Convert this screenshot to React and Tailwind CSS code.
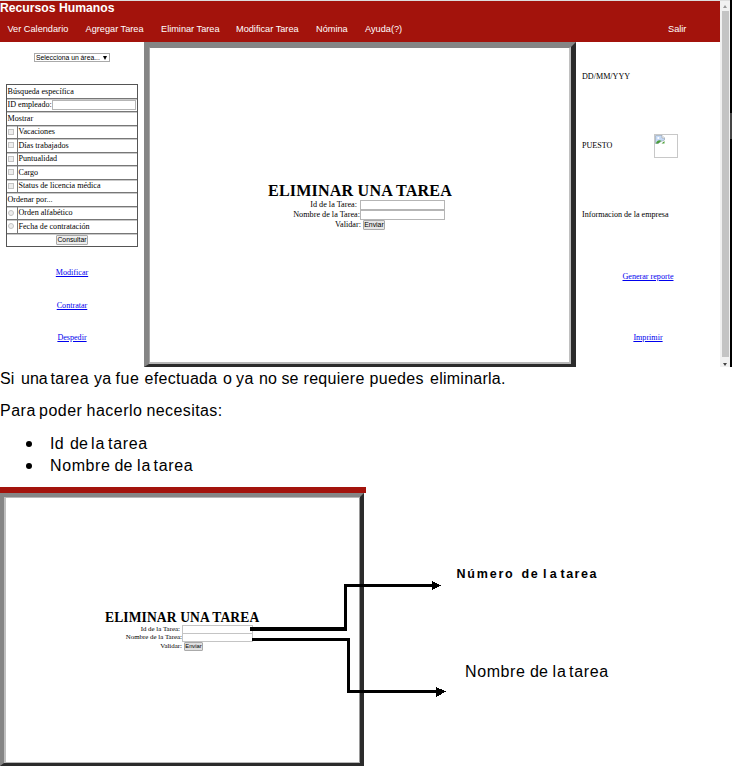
import React from "react";

const serif = "font-['Liberation_Serif',serif]";
const sans = "font-['Liberation_Sans',sans-serif]";

function Words({ items }) {
  return (
    <span className="flex whitespace-nowrap">
      {items.map(([word, width, spacing], i) => (
        <span key={i} className="shrink-0" style={{ width, letterSpacing: spacing }}>
          {word + " "}
        </span>
      ))}
    </span>
  );
}

function NavItem({ className, children }) {
  return <a className={`shrink-0 whitespace-nowrap ${className}`}>{children}</a>;
}

function Row({ kind, children }) {
  return (
    <div className="flex min-h-0 flex-1 items-stretch border-b border-[#777] shadow-[0_1px_0_#c9c9c9]">
      {kind && (
        <div className="flex w-[11px] shrink-0 items-center border-r border-[#777] pl-px">
          <span
            className={`block size-[6px] border border-[#c3c3c3] bg-[#eee] ${kind === "radio" ? "rounded-full" : ""}`}
          />
        </div>
      )}
      <div className="flex flex-1 items-center whitespace-nowrap pl-[0.5px]">{children}</div>
    </div>
  );
}

function SideLink({ className, children }) {
  return (
    <a className={`flex items-center justify-center text-[8.1px] text-[#0000ee] underline ${className}`}>
      {children}
    </a>
  );
}

function LargeForm() {
  return (
    <div className={`flex flex-col text-[8.2px] leading-[10px] ${serif}`}>
      <h1 className="ml-[118px] mt-[133px] h-[19px] whitespace-nowrap text-[16.1px] font-bold leading-[19px] tracking-[0.17px]">
        ELIMINAR UNA TAREA
      </h1>
      <div className="flex h-[10px] whitespace-nowrap">
        <span className="w-[207px] text-right">Id de la Tarea:</span>
        <span className="ml-[3px] h-[10px] w-[85px] border border-[#b5b5b5] bg-white" />
      </div>
      <div className="flex h-[10px] whitespace-nowrap">
        <span className="w-[210px] text-right">Nombre de la Tarea:</span>
        <span className="h-[10px] w-[85px] border border-[#b5b5b5] bg-white" />
      </div>
      <div className="flex h-[10px] whitespace-nowrap">
        <span className="w-[211px] text-right">Validar:</span>
        <button className={`ml-[2px] h-[10px] w-[22px] rounded-[1px] border border-[#aaa] bg-[#e6e6e6] text-[6.9px] leading-[8px] ${sans}`}>
          Enviar
        </button>
      </div>
    </div>
  );
}

function SmallForm() {
  return (
    <div className={`flex flex-col text-[6.9px] leading-[8px] ${serif}`}>
      <h2 className="ml-[99px] mt-[111px] h-[16px] whitespace-nowrap text-[13.55px] font-bold leading-[17px] tracking-[0.11px]">
        ELIMINAR UNA TAREA
      </h2>
      <div className="flex h-[8px] whitespace-nowrap">
        <span className="w-[174px] text-right">Id de la Tarea:</span>
        <span className="ml-[2px] h-[9px] w-[71px] border border-[#c4c4c4]" />
      </div>
      <div className="flex h-[8px] whitespace-nowrap">
        <span className="w-[176px] text-right">Nombre de la Tarea:</span>
        <span className="h-[9px] w-[71px] border border-[#c4c4c4]" />
      </div>
      <div className="flex h-[9px] whitespace-nowrap">
        <span className="w-[176px] pt-px text-right">Validar:</span>
        <button className={`ml-[2px] mt-px h-[9px] w-[19px] rounded-[1px] border border-[#aaa] bg-[#e0e0e0] text-[5.8px] leading-[7px] ${sans}`}>
          Enviar
        </button>
      </div>
    </div>
  );
}

function BrokenImage() {
  return (
    <span className="mb-[2px] block size-[24px] border border-[#c8c8c8] bg-white">
      <svg width="10" height="9" viewBox="0 0 10 9" className="block">
        <path d="M0.5 0.5H7L9.5 3V5L6 6.5L3 8.5H0.5Z" fill="#c5d9f5" stroke="#9aa9b8" strokeWidth="0.7" />
        <path d="M7 0.5V3H9.5" fill="#fff" stroke="#999" strokeWidth="0.6" />
        <circle cx="3.3" cy="3" r="1.1" fill="#fff" />
        <path d="M0.8 8.5C2 5.5 4 4.5 6.5 5.8L3.2 8.5Z" fill="#4b9d39" />
        <path d="M6.5 8.5L9.5 6V8.5Z" fill="#4b9d39" />
      </svg>
    </span>
  );
}

function AppWindow() {
  return (
    <section className="flex h-[367px] w-[733px]">
      <div className="flex w-[720px] shrink-0 flex-col">
        <header className={`h-[42px] border-t border-[#ddd] bg-[#a3130c] text-white ${sans}`}>
          <h1 className="h-[14px] whitespace-nowrap text-[12.2px] font-bold leading-[14px]">Recursos Humanos</h1>
          <nav className="flex h-[28px] pl-[7.5px] text-[9.2px] leading-[28px]">
            <NavItem className="w-[78px]">Ver Calendario</NavItem>
            <NavItem className="w-[75.5px]">Agregar Tarea</NavItem>
            <NavItem className="w-[75px]">Eliminar Tarea</NavItem>
            <NavItem className="w-[80px]">Modificar Tarea</NavItem>
            <NavItem className="w-[49px]">Nómina</NavItem>
            <NavItem className="w-[303px]">Ayuda(?)</NavItem>
            <NavItem className="w-[30px]">Salir</NavItem>
          </nav>
        </header>
        <div className={`flex h-[325px] text-[8.1px] ${serif}`}>
          <aside className="w-[144px] shrink-0 pt-[11px]">
            <div className={`ml-[34px] flex h-[9px] w-[76px] items-center justify-between border border-[#aaa] pl-px pr-[2px] text-[6.8px] leading-[7px] ${sans}`}>
              <span className="whitespace-nowrap">Selecciona un área...</span>
              <svg width="4" height="4" viewBox="0 0 4 4">
                <path d="M0 0H4L2 4Z" fill="#000" />
              </svg>
            </div>
            <div className="ml-[6px] mt-[22px] flex h-[163px] w-[132px] flex-col border border-[#555] leading-[9px]">
              <Row>Búsqueda específica</Row>
              <Row>
                ID empleado:
                <span className="mr-px h-[10px] flex-1 border border-[#b5b5b5]" />
              </Row>
              <Row>Mostrar</Row>
              <Row kind="check">Vacaciones</Row>
              <Row kind="check">Días trabajados</Row>
              <Row kind="check">Puntualidad</Row>
              <Row kind="check">Cargo</Row>
              <Row kind="check">Status de licencia médica</Row>
              <Row>Ordenar por...</Row>
              <Row kind="radio">Orden alfabético</Row>
              <Row kind="radio">Fecha de contratación</Row>
              <div className="flex flex-1 items-center justify-center">
                <button className={`h-[10px] w-[32px] rounded-[1px] border border-[#aaa] bg-[#eee] text-[6.8px] leading-[8px] ${sans}`}>
                  Consultar
                </button>
              </div>
            </div>
            <nav className="mt-[10px]">
              <SideLink className="h-[32.5px]">Modificar</SideLink>
              <SideLink className="h-[32.5px]">Contratar</SideLink>
              <SideLink className="h-[32.5px]">Despedir</SideLink>
            </nav>
          </aside>
          <main className="w-[432px] shrink-0 border-b-[3px] border-l-[5px] border-r-[5px] border-t-[5px] border-b-[#2b2b2b] border-l-[#858585] border-r-[#2b2b2b] border-t-[#858585]">
            <div className="h-full border-b-2 border-l border-r-2 border-t border-b-[#b8b8b8] border-l-[#a8a8a8] border-r-[#c0c0c0] border-t-[#858585]">
              <LargeForm />
            </div>
          </main>
          <aside className="flex flex-1 flex-col pl-[6px] pt-px">
            <div className="flex h-[69px] items-center">DD/MM/YYY</div>
            <div className="flex h-[69px] items-center">
              <span className="w-[72px]">PUESTO</span>
              <BrokenImage />
            </div>
            <div className="flex h-[69px] items-center whitespace-nowrap">Informacion de la empresa</div>
            <SideLink className="mr-[6px] h-[54px]">Generar reporte</SideLink>
            <SideLink className="mr-[6px] h-[62px] pt-[6px]">Imprimir</SideLink>
          </aside>
        </div>
      </div>
      <div className="flex w-[10px] flex-col items-center border-t border-[#ddd] bg-[#f1f1f1]">
        <div className="flex h-[10px] items-center">
          <svg width="4" height="3" viewBox="0 0 4 3"><path d="M0 3L2 0L4 3Z" fill="#999" /></svg>
        </div>
        <div className="w-[7px] flex-1 bg-[#c4c4c4]" />
        <div className="flex h-[10px] items-center pt-[5px]">
          <svg width="4" height="3" viewBox="0 0 4 3"><path d="M0 0L2 3L4 0Z" fill="#444" /></svg>
        </div>
      </div>
      <div className="w-[2px] bg-black pt-[113px]">
        <div className="h-[26px] bg-[#444]" />
      </div>
    </section>
  );
}

function Instructions() {
  return (
    <section className="h-[120px] text-[16px] leading-[22px]">
      <p className="pt-px">
        <Words
          items={[
            ["Si", 21, 0.2], ["una", 29.5, 0], ["tarea", 43.5, 0.4], ["ya", 21.5, 0.3], ["fue", 29, 0.6],
            ["efectuada", 78.5, 0.3], ["o", 13, 0], ["ya", 23, 0.5], ["no", 22.5, 0], ["se", 22, 0],
            ["requiere", 66, 0.3], ["puedes", 60.5, 0.3], ["eliminarla.", 80, 0.25],
          ]}
        />
      </p>
      <p className="pt-[10px]">
        <Words items={[["Para", 39, 0.5], ["poder", 47.5, 0.5], ["hacerlo", 60, 0.5], ["necesitas:", 90, 0.4]]} />
      </p>
      <ul className="pt-[11px]">
        <li className="flex items-center">
          <span className="ml-[26px] mr-[18px] size-[6px] rounded-full bg-black" />
          <Words items={[["Id", 20, 0.3], ["de", 21, 0], ["la", 17, 1], ["tarea", 50, 0.7]]} />
        </li>
        <li className="flex items-center">
          <span className="ml-[26px] mr-[18px] size-[6px] rounded-full bg-black" />
          <Words items={[["Nombre", 64.5, 0.6], ["de", 22.5, 0], ["la", 16.5, 1], ["tarea", 50, 0.7]]} />
        </li>
      </ul>
    </section>
  );
}

function Diagram() {
  return (
    <section className="relative flex h-[292px] w-[733px]">
      <div className="w-[366px] shrink-0">
        <div className="h-[6px] bg-[#a3130c]" />
        <div className="h-[273px] w-[364px] border-b-[3px] border-l-[4px] border-r-[4px] border-t-[4px] border-b-[#2b2b2b] border-l-[#858585] border-r-[#2b2b2b] border-t-[#858585]">
          <div className="h-full border-b border-l-2 border-r border-t border-b-[#b8b8b8] border-l-[#c0c0c0] border-r-[#9a9a9a] border-t-[#b8b8b8]">
            <SmallForm />
          </div>
        </div>
      </div>
      <div className="pt-[77px]">
        <div className="pl-[90.5px] text-[12.5px] font-bold leading-[20px]">
          <Words items={[["Número", 65, 1.8], ["de", 21.5, 1.5], ["la", 17.5, 3.2], ["tarea", 45, 1.5]]} />
        </div>
        <div className="pl-[99px] pt-[77px] text-[16px] leading-[22px]">
          <Words items={[["Nombre", 65, 0.6], ["de", 22.5, 0], ["la", 16.5, 1], ["tarea", 50, 0.7]]} />
        </div>
      </div>
      <svg className="absolute left-0 top-0" width="733" height="292" viewBox="0 487 733 292" shapeRendering="crispEdges">
        <path d="M250 629H347" fill="none" stroke="#000" strokeWidth="4" />
        <path d="M345.5 631V585.5H434" fill="none" stroke="#000" strokeWidth="3" />
        <path d="M432 581L441 585.5L432 590Z" />
        <path d="M252 639.5H348.5V691.5H438" fill="none" stroke="#000" strokeWidth="3" />
        <path d="M436 687L446 691.5L436 697Z" />
      </svg>
    </section>
  );
}

export default function App() {
  return (
    <div className={`h-[779px] w-[733px] overflow-hidden bg-white text-black ${sans}`}>
      <AppWindow />
      <Instructions />
      <Diagram />
    </div>
  );
}
